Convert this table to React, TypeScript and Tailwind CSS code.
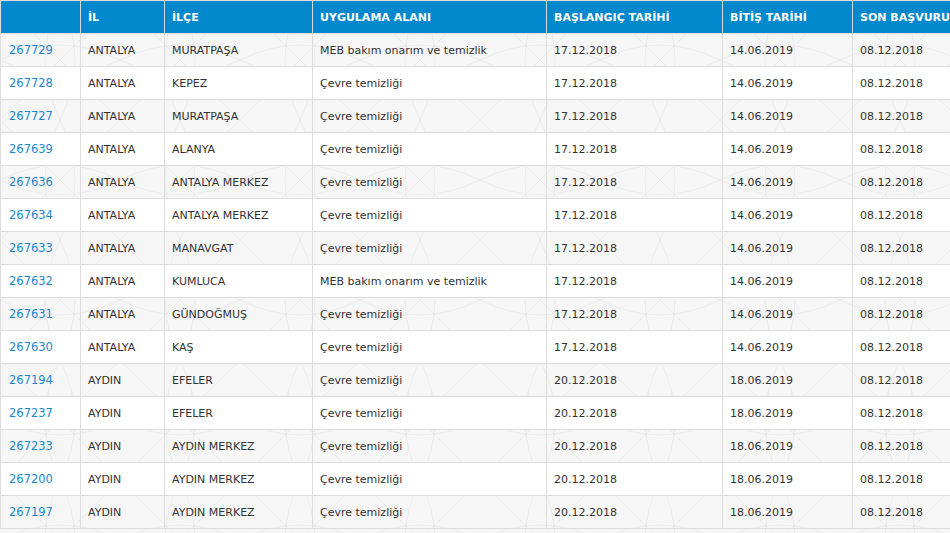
import React from "react";

const rows: string[][] = [
  ["267729", "ANTALYA", "MURATPAŞA", "MEB bakım onarım ve temizlik", "17.12.2018", "14.06.2019", "08.12.2018"],
  ["267728", "ANTALYA", "KEPEZ", "Çevre temizliği", "17.12.2018", "14.06.2019", "08.12.2018"],
  ["267727", "ANTALYA", "MURATPAŞA", "Çevre temizliği", "17.12.2018", "14.06.2019", "08.12.2018"],
  ["267639", "ANTALYA", "ALANYA", "Çevre temizliği", "17.12.2018", "14.06.2019", "08.12.2018"],
  ["267636", "ANTALYA", "ANTALYA MERKEZ", "Çevre temizliği", "17.12.2018", "14.06.2019", "08.12.2018"],
  ["267634", "ANTALYA", "ANTALYA MERKEZ", "Çevre temizliği", "17.12.2018", "14.06.2019", "08.12.2018"],
  ["267633", "ANTALYA", "MANAVGAT", "Çevre temizliği", "17.12.2018", "14.06.2019", "08.12.2018"],
  ["267632", "ANTALYA", "KUMLUCA", "MEB bakım onarım ve temizlik", "17.12.2018", "14.06.2019", "08.12.2018"],
  ["267631", "ANTALYA", "GÜNDOĞMUŞ", "Çevre temizliği", "17.12.2018", "14.06.2019", "08.12.2018"],
  ["267630", "ANTALYA", "KAŞ", "Çevre temizliği", "17.12.2018", "14.06.2019", "08.12.2018"],
  ["267194", "AYDIN", "EFELER", "Çevre temizliği", "20.12.2018", "18.06.2019", "08.12.2018"],
  ["267237", "AYDIN", "EFELER", "Çevre temizliği", "20.12.2018", "18.06.2019", "08.12.2018"],
  ["267233", "AYDIN", "AYDIN MERKEZ", "Çevre temizliği", "20.12.2018", "18.06.2019", "08.12.2018"],
  ["267200", "AYDIN", "AYDIN MERKEZ", "Çevre temizliği", "20.12.2018", "18.06.2019", "08.12.2018"],
  ["267197", "AYDIN", "AYDIN MERKEZ", "Çevre temizliği", "20.12.2018", "18.06.2019", "08.12.2018"],
];

const headers = ["", "İL", "İLÇE", "UYGULAMA ALANI", "BAŞLANGIÇ TARİHİ", "BİTİŞ TARİHİ", "SON BAŞVURU"];
const widths = ["w-[80px]", "w-[84px]", "w-[148px]", "w-[234px]", "w-[176px]", "w-[130px]", "w-[130px]"];

function Pattern() {
  return (
    <svg className="absolute inset-0 h-full w-full" width="950" height="533">
      <defs>
        <pattern id="p" width="120" height="120" patternUnits="userSpaceOnUse">
          <g fill="none" stroke="#ebebeb" strokeWidth="1">
            <path d="M0 60 Q60 30 120 60" />
            <path d="M60 0 Q30 60 60 120" />
            <path d="M0 0 L120 120" />
            <path d="M120 0 L0 120" />
            <path d="M0 60 Q60 90 120 60" />
            <path d="M60 0 Q90 60 60 120" />
          </g>
        </pattern>
      </defs>
      <rect width="100%" height="100%" fill="#f6f6f6" />
      <rect width="100%" height="100%" fill="url(#p)" />
    </svg>
  );
}

export default function App() {
  return (
    <div className="relative h-[533px] w-[950px] overflow-hidden bg-[#f6f6f6] font-['DejaVu_Sans',Verdana,sans-serif] text-[11px] text-[#333]">
      <Pattern />
      <div className="relative w-[1100px] border-l border-[#dddddd]">
        <div className="flex h-[33px] border-t border-[#dddddd] bg-[#0288cc]">
          {headers.map((h, i) => (
            <div
              key={i}
              className={`${widths[i]} flex shrink-0 items-center border-r border-[#d8d8d8] px-[7px] pt-[3px] text-[11px] font-bold text-white`}
            >
              {h}
            </div>
          ))}
        </div>
        {rows.map((r, ri) => (
          <div
            key={ri}
            className={`flex h-[33px] border-t border-[#dddddd] ${ri % 2 === 1 ? "bg-white" : "bg-transparent"}`}
          >
            {r.map((c, ci) => (
              <div
                key={ci}
                className={`${widths[ci]} flex shrink-0 items-center border-r border-[#dddddd] pt-[2px] ${ci === 0 ? "pl-[8px] text-[11.5px] text-[#1a88cf]" : "px-[7px]"}`}
              >
                {c}
              </div>
            ))}
          </div>
        ))}
        <div className="h-0 border-t border-[#dddddd]" />
      </div>
    </div>
  );
}
